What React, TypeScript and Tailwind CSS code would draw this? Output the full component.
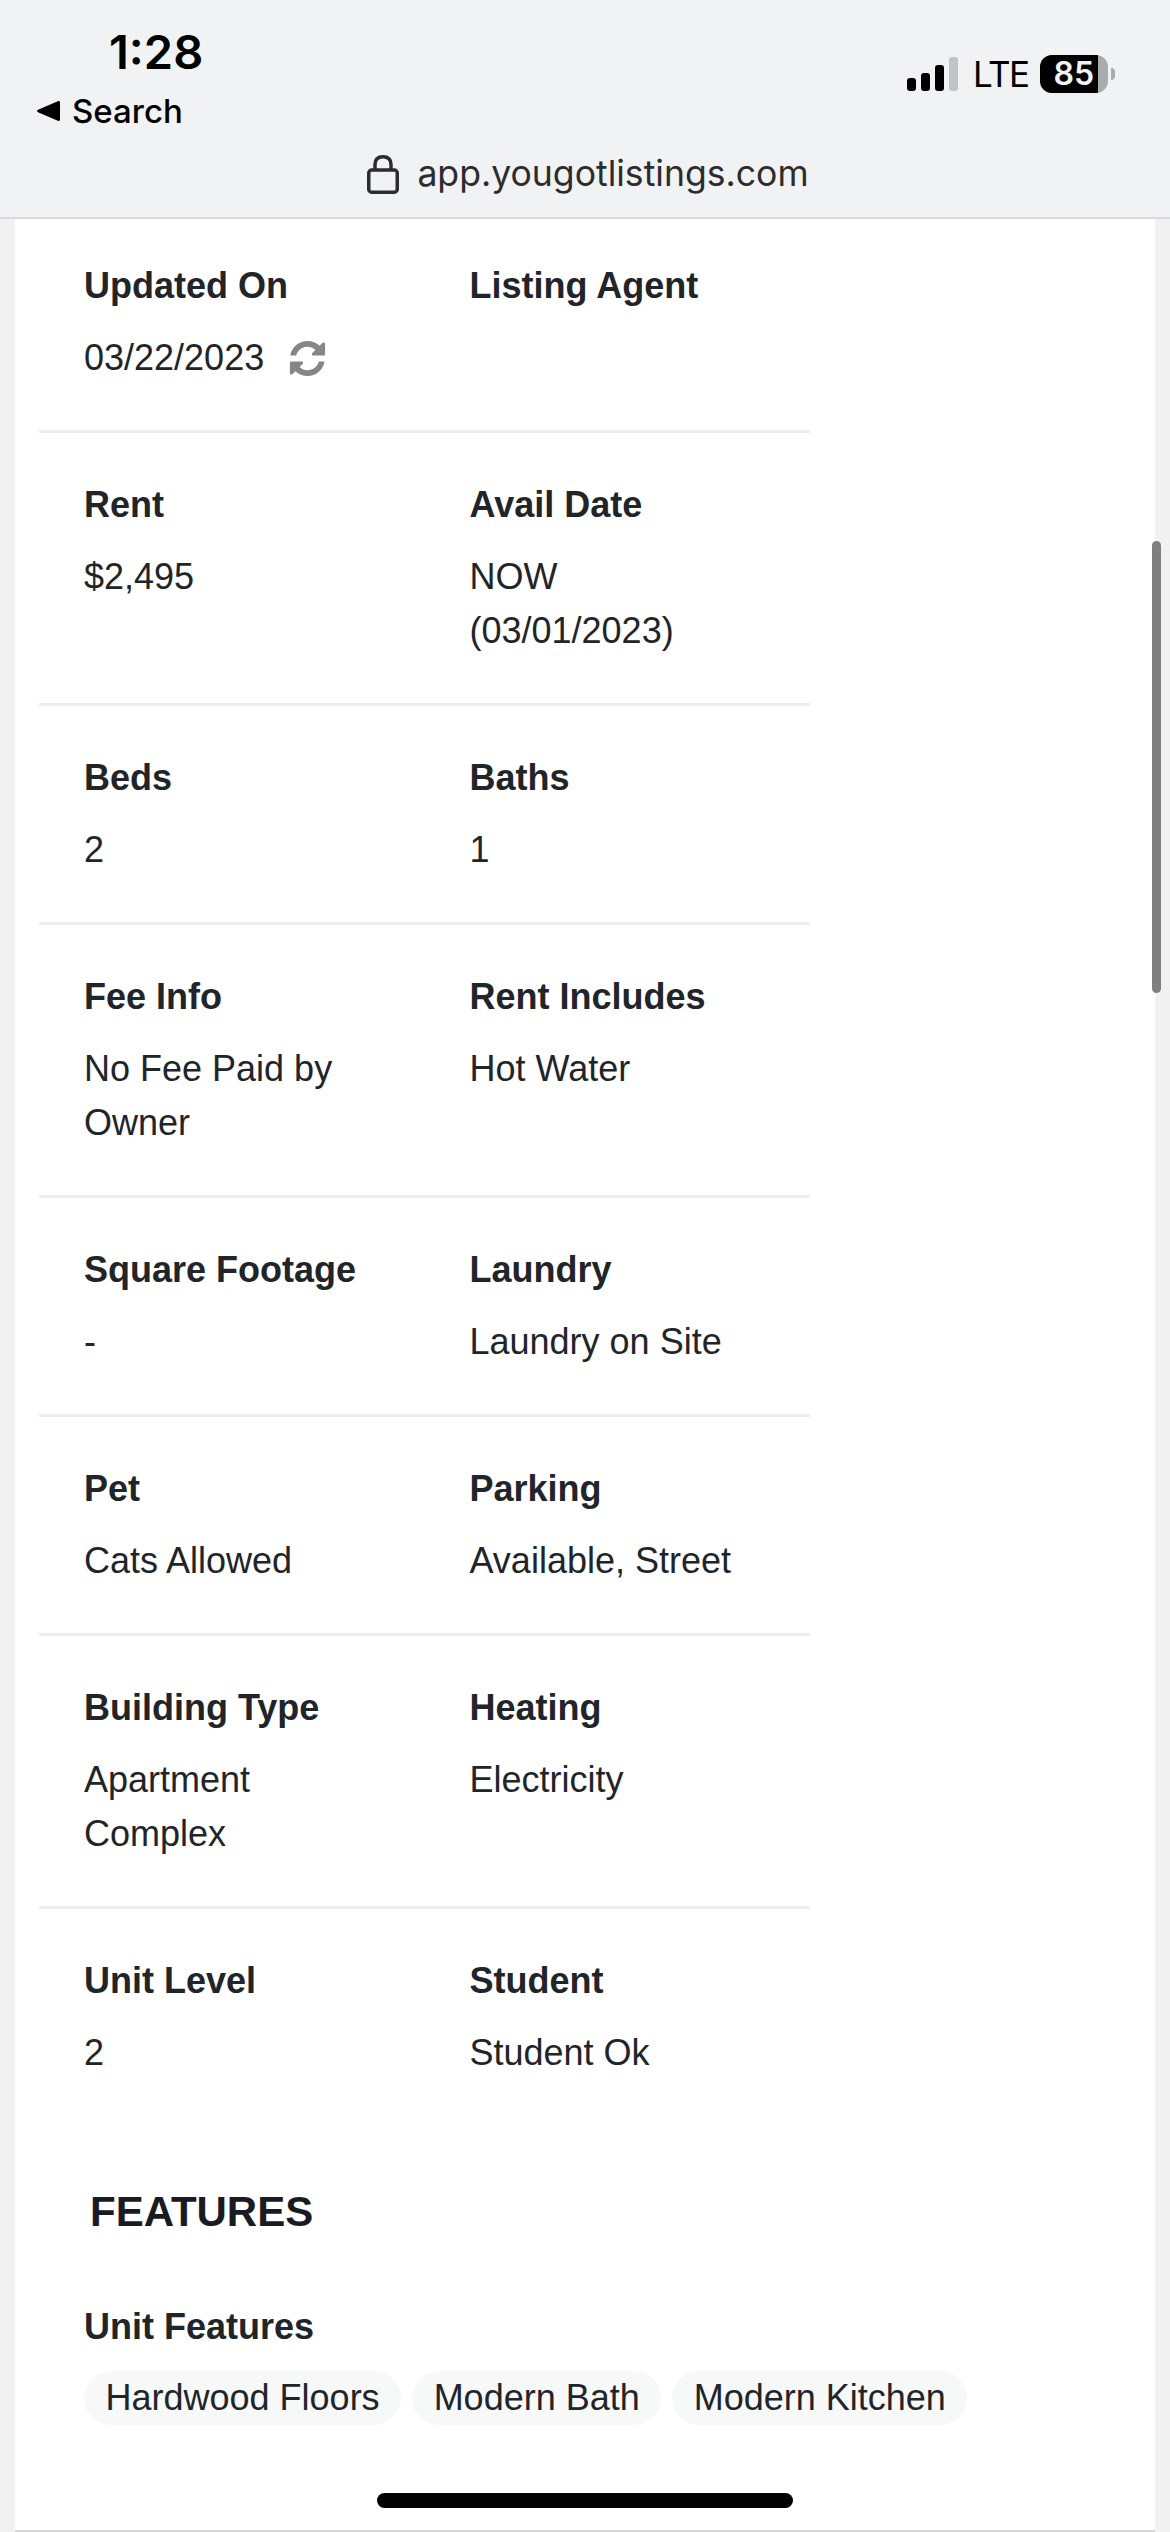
type Cell = { label: string; value: string; refresh?: boolean };

const rows: Cell[][] = [
  [{ label: "Updated On", value: "03/22/2023", refresh: true }, { label: "Listing Agent", value: "" }],
  [{ label: "Rent", value: "$2,495" }, { label: "Avail Date", value: "NOW (03/01/2023)" }],
  [{ label: "Beds", value: "2" }, { label: "Baths", value: "1" }],
  [{ label: "Fee Info", value: "No Fee Paid by Owner" }, { label: "Rent Includes", value: "Hot Water" }],
  [{ label: "Square Footage", value: "-" }, { label: "Laundry", value: "Laundry on Site" }],
  [{ label: "Pet", value: "Cats Allowed" }, { label: "Parking", value: "Available, Street" }],
  [{ label: "Building Type", value: "Apartment Complex" }, { label: "Heating", value: "Electricity" }],
  [{ label: "Unit Level", value: "2" }, { label: "Student", value: "Student Ok" }],
];

const chips = ["Hardwood Floors", "Modern Bath", "Modern Kitchen"];

function RefreshIcon() {
  return (
    <svg className="ml-[23px] text-[#868686]" width="41" height="41" viewBox="0 0 1792 1792" fill="currentColor">
      <path d="M1639 1056q0 5-1 7-64 268-268 434.5t-478 166.5q-146 0-282.5-55t-243.5-157l-129 129q-19 19-45 19t-45-19-19-45v-448q0-26 19-45t45-19h448q26 0 45 19t19 45-19 45l-137 137q71 66 161 102t187 36q134 0 250-65t186-179q11-17 53-117 8-23 30-23h192q13 0 22.5 9.5t9.5 22.5zm25-800v448q0 26-19 45t-45 19h-448q-26 0-45-19t-19-45 19-45l138-138q-148-137-349-137-134 0-250 65t-186 179q-11 17-53 117-8 23-30 23h-199q-13 0-22.5-9.5t-9.5-22.5v-7q65-268 270-434.5t480-166.5q146 0 284 55.5t245 156.5l130-129q19-19 45-19t45 19 19 45z" />
    </svg>
  );
}

function StatusBar() {
  return (
    <div className="flex justify-between">
      <div className="pl-[37px] pt-[28px]">
        <div className="pl-[72px] text-[47px] leading-[48px] font-semibold text-black">1:28</div>
        <div className="flex items-center gap-[12px] mt-[15px] text-[33px] leading-[40px] font-medium text-black">
          <svg width="23" height="20" viewBox="0 0 23 20">
            <path d="M23 1.5V18.5C23 19.8 21.8 20.4 20.8 19.7L1 11.2C-.2 10.6-.2 9.4 1 8.8L20.8.3C21.8-.4 23 .2 23 1.5Z" fill="#000" />
          </svg>
          Search
        </div>
      </div>
      <div className="flex items-center h-[38px] mt-[55px] mr-[55px] text-black">
        <div className="flex items-end gap-[5px] h-[34px]">
          <div className="w-[9px] h-[13px] rounded-[3px] bg-black" />
          <div className="w-[9px] h-[18px] rounded-[3px] bg-black" />
          <div className="w-[9px] h-[26px] rounded-[3px] bg-black" />
          <div className="w-[9px] h-[34px] rounded-[3px] bg-[#c2c3c5]" />
        </div>
        <span className="ml-[15px] w-[52px] text-[35px] leading-[38px] font-normal tracking-[-1.5px]">LTE</span>
        <div className="ml-[15px] flex h-[38px] w-[68px] overflow-hidden rounded-[12px] bg-[#aaabad]">
          <div className="flex w-[58px] items-center justify-end bg-black pr-[4px] text-[32px] leading-[38px] font-semibold text-[#f1f2f4]">85</div>
        </div>
        <div className="ml-[3px] h-[12px] w-[4px] rounded-r-full bg-[#aaabad]" />
      </div>
    </div>
  );
}

function AddressBar() {
  return (
    <div className="flex justify-center items-center gap-[18px] mt-[21px] ml-[6px] text-[#2c2c2e]">
      <svg width="32" height="39" viewBox="0 0 32 39" fill="none" stroke="currentColor" strokeWidth="3.5">
        <rect x="1.75" y="15" width="28.5" height="22.25" rx="3" />
        <path d="M8 15V9.5C8 4.5 11 1.75 16 1.75S24 4.5 24 9.5V15" />
      </svg>
      <span className="text-[35.6px] leading-[44px] font-normal">app.yougotlistings.com</span>
    </div>
  );
}

function DetailRow({ cells, first, last }: { cells: Cell[]; first: boolean; last: boolean }) {
  return (
    <div className={last ? "grid grid-cols-2" : "grid grid-cols-2 pb-[45px] border-b-[3px] border-[#eeeeee]"}>
      {cells.map((cell) => (
        <div key={cell.label} className={first ? "px-[45px] pt-[40px]" : "px-[45px] pt-[45px]"}>
          <div className="font-bold mb-[18px]">{cell.label}</div>
          <div className="flex items-center">
            {cell.value}
            {cell.refresh && <RefreshIcon />}
          </div>
        </div>
      ))}
    </div>
  );
}

export default function App() {
  return (
    <div className="relative h-[2532px] w-[1170px] overflow-hidden bg-[#f1f1f1] font-['Liberation_Sans',Arial,sans-serif] text-[36px] leading-[54px] text-[#212529]">
      <header className="h-[219px] border-b-2 border-[#d8d9da] bg-[#f1f2f4] font-['Inter',sans-serif]">
        <StatusBar />
        <AddressBar />
      </header>
      <main className="mx-[15px] h-[2313px] border-b-2 border-[#d8d8d8] bg-white">
        <div className="ml-[24px] w-[771px]">
          {rows.map((cells, i) => (
            <DetailRow key={i} cells={cells} first={i === 0} last={i === rows.length - 1} />
          ))}
        </div>
        <h2 className="ml-[75px] mt-[107px] text-[42px] leading-[50px] font-bold text-[#1a1a23]">FEATURES</h2>
        <div className="ml-[69px] mt-[63px] font-bold">Unit Features</div>
        <div className="ml-[69px] mt-[17px] flex gap-[11px]">
          {chips.map((chip) => (
            <span key={chip} className="rounded-full bg-[#f7f8f8] px-[21.5px]">{chip}</span>
          ))}
        </div>
      </main>
      <div className="absolute left-[1152px] top-[541px] h-[452px] w-[9px] rounded-full bg-[#7f7f7f]" />
      <div className="absolute left-[377px] top-[2493px] h-[15px] w-[416px] rounded-full bg-black" />
    </div>
  );
}
